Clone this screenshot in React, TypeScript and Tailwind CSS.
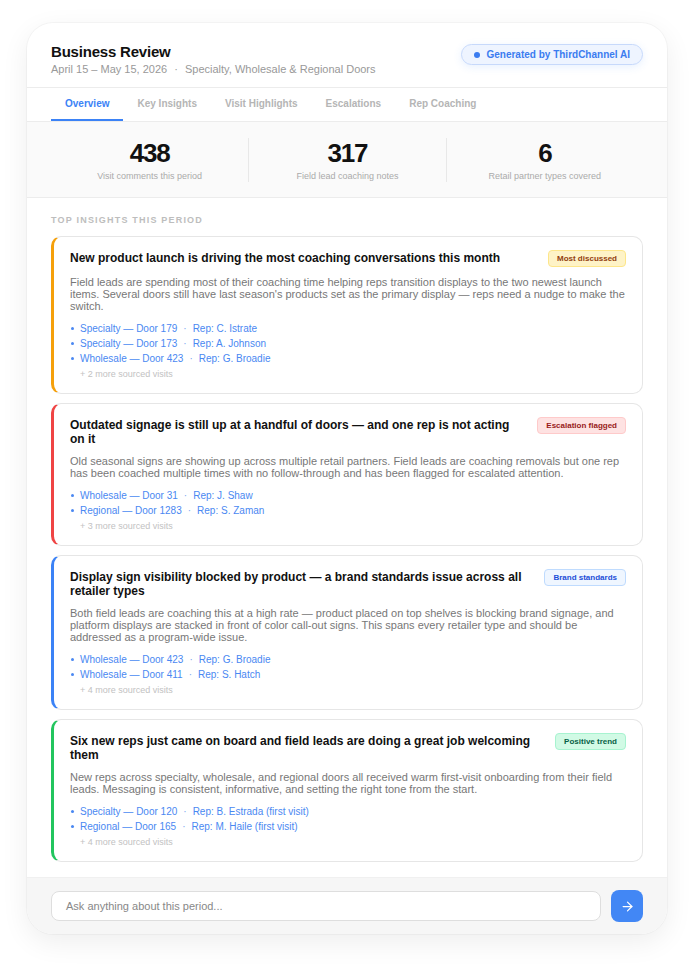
import { ArrowRight } from 'lucide-react'

const tabs = ['Overview', 'Key Insights', 'Visit Highlights', 'Escalations', 'Rep Coaching']

const stats = [
  { value: '438', label: 'Visit comments this period' },
  { value: '317', label: 'Field lead coaching notes' },
  { value: '6', label: 'Retail partner types covered' },
]

const insights = [
  {
    id: 'launch',
    title: 'New product launch is driving the most coaching conversations this month',
    tag: 'Most discussed',
    accent: 'border-l-[#f5a00b]',
    tagStyle: 'bg-[#fef3c7] border-[#fde68a] text-[#92400e]',
    body: "Field leads are spending most of their coaching time helping reps transition displays to the two newest launch items. Several doors still have last season's products set as the primary display — reps need a nudge to make the switch.",
    visits: [
      ['Specialty — Door 179', 'Rep: C. Istrate'],
      ['Specialty — Door 173', 'Rep: A. Johnson'],
      ['Wholesale — Door 423', 'Rep: G. Broadie'],
    ],
    more: 2,
  },
  {
    id: 'signage',
    title: 'Outdated signage is still up at a handful of doors — and one rep is not acting on it',
    tag: 'Escalation flagged',
    accent: 'border-l-[#ef4444]',
    tagStyle: 'bg-[#fee2e2] border-[#fecaca] text-[#991b1b]',
    body: 'Old seasonal signs are showing up across multiple retail partners. Field leads are coaching removals but one rep has been coached multiple times with no follow-through and has been flagged for escalated attention.',
    visits: [
      ['Wholesale — Door 31', 'Rep: J. Shaw'],
      ['Regional — Door 1283', 'Rep: S. Zaman'],
    ],
    more: 3,
  },
  {
    id: 'visibility',
    title: 'Display sign visibility blocked by product — a brand standards issue across all retailer types',
    tag: 'Brand standards',
    accent: 'border-l-[#3b82f6]',
    tagStyle: 'bg-[#eff6ff] border-[#bfdbfe] text-[#1d4ed8]',
    body: 'Both field leads are coaching this at a high rate — product placed on top shelves is blocking brand signage, and platform displays are stacked in front of color call-out signs. This spans every retailer type and should be addressed as a program-wide issue.',
    visits: [
      ['Wholesale — Door 423', 'Rep: G. Broadie'],
      ['Wholesale — Door 411', 'Rep: S. Hatch'],
    ],
    more: 4,
  },
  {
    id: 'onboarding',
    title: 'Six new reps just came on board and field leads are doing a great job welcoming them',
    tag: 'Positive trend',
    accent: 'border-l-[#22c55e]',
    tagStyle: 'bg-[#d1fae5] border-[#a7f3d0] text-[#065f46]',
    body: 'New reps across specialty, wholesale, and regional doors all received warm first-visit onboarding from their field leads. Messaging is consistent, informative, and setting the right tone from the start.',
    visits: [
      ['Specialty — Door 120', 'Rep: B. Estrada (first visit)'],
      ['Regional — Door 165', 'Rep: M. Haile (first visit)'],
    ],
    more: 4,
  },
]

export default function App() {
  return (
    <div className="min-h-screen bg-white px-[27px] pt-[23px] pb-9 font-['Liberation_Sans',Arial,sans-serif]">
      <div className="overflow-hidden rounded-[26px] bg-white shadow-[0_0_0_1px_rgba(0,0,0,0.03),0_8px_28px_rgba(0,0,0,0.07)]">
        {/* Header */}
        <div className="flex items-start justify-between border-b border-[#ececec] px-6 pt-5 pb-[11px]">
          <div>
            <h1 className="text-[15px] leading-[18px] font-bold tracking-[-0.2px] text-[#111]">Business Review</h1>
            <p className="mt-[1px] text-[11px] leading-[14px] text-[#999]">
              April 15 – May 15, 2026 <span className="mx-1">·</span> Specialty, Wholesale &amp; Regional Doors
            </p>
          </div>
          <span className="mt-[1px] flex h-[21px] items-center gap-[6px] rounded-full border border-[#c7d9fb] bg-[#eef4ff] px-3 text-[10px] font-bold text-[#3b7cf0] shadow-[0_2px_8px_rgba(59,130,246,0.12)]">
            <span className="h-[6px] w-[6px] rounded-full bg-[#3b7cf0]" />
            Generated by ThirdChannel AI
          </span>
        </div>

        {/* Tabs */}
        <div className="flex border-b border-[#ececec] px-6">
          {tabs.map((tab, i) => (
            <div
              key={tab}
              className={`flex h-[33px] items-center border-b-2 px-[14px] text-[10px] font-bold ${
                i === 0 ? 'border-[#3b82f6] text-[#3b82f6]' : 'border-transparent text-[#b5b5b5]'
              }`}
            >
              {tab}
            </div>
          ))}
        </div>

        {/* Stats */}
        <div className="grid grid-cols-3 border-b border-[#ececec] bg-[#fafafa] px-6 pt-4 pb-[15px]">
          {stats.map((s, i) => (
            <div key={s.label} className={`flex flex-col items-center ${i > 0 ? 'border-l border-[#e8e8e8]' : ''}`}>
              <div className="text-[26px] leading-[30px] font-bold tracking-[-1.2px] text-[#111]">{s.value}</div>
              <div className="mt-[2px] text-[9px] leading-[12px] text-[#aaa]">{s.label}</div>
            </div>
          ))}
        </div>

        {/* Insights */}
        <div className="px-6 pt-[16px] pb-[15px]">
          <h2 className="text-[9px] leading-[12px] font-bold tracking-[1.2px] text-[#bdbdbd]">TOP INSIGHTS THIS PERIOD</h2>
          <div className="mt-[10px] flex flex-col gap-[9px]">
            {insights.map((item) => (
              <div
                key={item.id}
                className={`rounded-[10px] border border-[#e6e6e6] border-l-[3px] bg-white pt-[13px] pr-4 pb-[13px] pl-4 ${item.accent}`}
              >
                <div className="flex items-start justify-between gap-4">
                  <h3 className="pt-[1px] text-[12px] leading-[14px] font-bold text-[#111]">{item.title}</h3>
                  <span className={`shrink-0 rounded-[4px] border px-2 py-[3px] text-[8px] leading-[9px] font-bold whitespace-nowrap ${item.tagStyle}`}>
                    {item.tag}
                  </span>
                </div>
                <p className="mt-[9px] text-[11px] leading-[12px] text-[#777]">{item.body}</p>
                <ul className="mt-[9px]">
                  {item.visits.map(([door, rep]) => (
                    <li key={door + rep} className="flex items-center text-[10px] leading-[15px] text-[#4a88f2]">
                      <span className="mr-[6px] ml-[1px] h-[3px] w-[3px] rounded-full bg-[#4a88f2]" />
                      {door}
                      <span className="mx-[6px] text-[#7aa5ef]">·</span>
                      {rep}
                    </li>
                  ))}
                </ul>
                <div className="mt-[2px] pl-[10px] text-[9px] leading-[12px] text-[#c2c2c2]">+ {item.more} more sourced visits</div>
              </div>
            ))}
          </div>
        </div>

        {/* Ask bar */}
        <div className="flex items-center gap-[10px] border-t border-[#f0f0f0] bg-[#f6f6f6] px-6 py-3">
          <div className="flex h-[30px] flex-1 items-center rounded-lg border border-[#dedede] bg-white px-[14px] text-[11px] text-[#888]">
            Ask anything about this period...
          </div>
          <button className="flex h-[32px] w-[32px] items-center justify-center rounded-lg bg-[#4287f5] text-white">
            <ArrowRight size={15} strokeWidth={2} />
          </button>
        </div>
      </div>
    </div>
  )
}
